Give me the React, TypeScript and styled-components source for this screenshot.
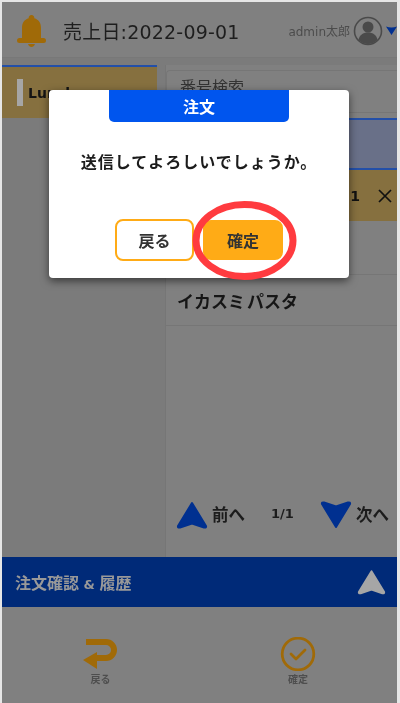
import React from "react";
import styled, { createGlobalStyle } from "styled-components";

const Global = createGlobalStyle`
  html, body { margin: 0; padding: 0; background: #e6e6e6; }
  * { box-sizing: border-box; }
  body { font-family: "DejaVu Sans", "Noto Sans CJK JP", sans-serif; }
`;

const Frame = styled.div`
  width: 400px;
  height: 703px;
  padding: 2px 3px 0 2px;
  background: #e6e6e6;
  overflow: hidden;
  filter: blur(0.35px);
`;
const Screen = styled.div`
  position: relative;
  height: 701px;
  display: flex;
  flex-direction: column;
  background: #808080;
`;
const Header = styled.header`
  height: 56px;
  flex: none;
  display: flex;
  align-items: center;
  padding: 2px 0 0 15px;
  border-bottom: 1px solid #787878;
`;
const DateText = styled.div`
  margin-left: 17px;
  font-size: 19px;
  letter-spacing: 0.2px;
  color: #1e1e1e;
  flex: 1;
`;
const UserName = styled.div`
  font-size: 12px;
  color: #4c4c4c;
  margin-right: 3px;
`;
const Caret = styled.svg`
  margin-left: 3px;
  flex: none;
`;
const Main = styled.main`
  flex: 1;
  display: flex;
  background: #7b7b7b;
  padding-top: 7px;
  min-height: 0;
`;
const Side = styled.aside`
  width: 155px;
  flex: none;
  border-top: 2px solid #234fa8;
`;
const Tab = styled.div`
  height: 51px;
  display: flex;
  align-items: center;
  background: #86703f;
  padding-left: 15px;
  gap: 5px;
  font-weight: 700;
  font-size: 14px;
  color: #141414;
`;
const TabMark = styled.span`
  width: 6px;
  height: 27px;
  background: #a6a6a6;
`;
const Right = styled.section`
  margin-left: 8px;
  flex: 1;
  min-width: 0;
  display: flex;
  flex-direction: column;
  background: #808080;
  border-left: 1px solid #767676;
  padding-bottom: 24px;
`;
const Search = styled.div`
  height: 43px;
  margin-top: 5px;
  flex: none;
  padding: 3px 0 0 13px;
  font-size: 16px;
  color: #333;
  border: 1px solid #767676;
  border-right: 0;
  border-radius: 4px 0 0 4px;
`;
const SelectedBand = styled.div`
  height: 52px;
  margin-top: 5px;
  flex: none;
  background: #697088;
  border-top: 2px solid #234fa8;
  border-bottom: 2px solid #234fa8;
`;
const TanRow = styled.div`
  height: 51px;
  flex: none;
  display: flex;
  align-items: center;
  justify-content: flex-end;
  background: #86703f;
  color: #111;
  padding-right: 5px;
  font-weight: 700;
  font-size: 14px;
  gap: 18px;
`;
const Row = styled.div<{ $h: number }>`
  height: ${(p) => p.$h}px;
  flex: none;
  display: flex;
  align-items: center;
  padding-left: 11px;
  border-bottom: 1px solid #767676;
  font-weight: 700;
  font-size: 17px;
  word-spacing: -4px;
  color: #161616;
`;
const Pager = styled.nav`
  margin-top: auto;
  height: 36px;
  display: flex;
  align-items: center;
  padding-left: 10px;
  font-weight: 700;
  color: #1c1c1c;
  font-size: 16.5px;
`;
const PagerLabel = styled.span`
  margin: 0 0 3px 4px;
`;
const PageCount = styled.span`
  width: 75px;
  margin-bottom: 3px;
  text-align: center;
  font-size: 13px;
`;
const Accordion = styled.div`
  height: 50px;
  flex: none;
  display: flex;
  align-items: center;
  justify-content: space-between;
  padding: 0 11px 0 13px;
  background: #002a78;
  color: #999;
  font-weight: 700;
  font-size: 16px;
`;
const Amp = styled.span`
  font-size: 13px;
`;
const Footer = styled.footer`
  height: 96px;
  flex: none;
  display: grid;
  grid-template-columns: 197px 198px;
  padding-top: 30px;
`;
const FootItem = styled.div`
  display: flex;
  flex-direction: column;
  align-items: center;
  font-size: 10px;
  font-weight: 700;
  color: #4e4e4e;
  gap: 2px;
  line-height: 14px;
`;
const Modal = styled.div`
  position: absolute;
  left: 47px;
  top: 88px;
  width: 300px;
  height: 188px;
  background: #fff;
  border-radius: 4px;
  box-shadow: 0 3px 9px rgba(0, 0, 0, 0.55);
  display: flex;
  flex-direction: column;
  align-items: center;
`;
const ModalTitle = styled.div`
  width: 180px;
  height: 32px;
  flex: none;
  display: flex;
  align-items: center;
  justify-content: center;
  background: #0055ee;
  color: #fff;
  font-weight: 700;
  font-size: 16px;
  border-radius: 0 0 5px 5px;
`;
const ModalText = styled.p`
  margin: 30px 0 0;
  font-size: 16px;
  letter-spacing: 1px;
  font-weight: 700;
  line-height: 22px;
  color: #1c1c1c;
  white-space: nowrap;
`;
const Actions = styled.div`
  margin-top: 45px;
  display: flex;
  align-items: center;
  gap: 9px;
`;
const Button = styled.div<{ $primary?: boolean }>`
  width: ${(p) => (p.$primary ? 80 : 79)}px;
  height: ${(p) => (p.$primary ? 40 : 42)}px;
  display: flex;
  align-items: center;
  justify-content: center;
  border-radius: 8px;
  border: 2px solid #ffab16;
  background: ${(p) => (p.$primary ? "#ffab16" : "#fff")};
  font-weight: 700;
  font-size: 16px;
  color: #333;
`;
const Ring = styled.svg`
  position: absolute;
  left: 140px;
  top: 109px;
`;

const NavArrow = ({ w, h, color, down }: { w: number; h: number; color: string; down?: boolean }) => (
  <svg width={w} height={h} viewBox="0 0 32 28" style={down ? { transform: "rotate(180deg)" } : undefined}>
    <path d="M16 2 L30 25 Q30.500 27 28 26.500 L16 22.500 L4 26.500 Q1.500 27 2 25 Z" fill={color} stroke={color} strokeWidth="2" strokeLinejoin="round" />
  </svg>
);

export default function App() {
  return (
    <Frame>
      <Global />
      <Screen>
        <Header>
          <svg width="29" height="32" viewBox="0 0 29 32">
            <path d="M14.500 0a2.800 2.800 0 0 1 2.800 3.200C21.800 4.500 24 8 24 13v10H5V13c0-5 2.200-8.500 6.700-9.800A2.800 2.800 0 0 1 14.500 0Z" fill="#a06a08" />
            <rect x="0" y="23" width="29" height="5" rx="2.500" fill="#a06a08" />
            <path d="M11 29h7c-.6 1.800-2 3-3.500 3S11.600 30.800 11 29Z" fill="#a06a08" />
          </svg>
          <DateText>売上日:2022-09-01</DateText>
          <UserName>admin太郎</UserName>
          <svg width="30" height="30" viewBox="0 0 30 30">
            <circle cx="15" cy="15" r="13.500" fill="none" stroke="#4a4a4a" strokeWidth="1.600" />
            <circle cx="15" cy="11" r="5.500" fill="#4a4a4a" />
            <path d="M5.500 24c.8-5 4.500-7.500 9.500-7.500s8.700 2.500 9.500 7.500c-2.500 2.500-5.800 4-9.500 4s-7-1.500-9.500-4Z" fill="#4a4a4a" />
          </svg>
          <Caret width="11" height="9" viewBox="0 0 11 9">
            <path d="M0 0.500 Q5.500 2.500 11 0.500 L5.500 9 Z" fill="#003090" />
          </Caret>
        </Header>
        <Main>
          <Side>
            <Tab>
              <TabMark />
              Lunch
            </Tab>
          </Side>
          <Right>
            <Search>番号検索</Search>
            <SelectedBand />
            <TanRow>
              <span>1</span>
              <svg width="14" height="14" viewBox="0 0 14 14">
                <path d="M1 1 13 13M13 1 1 13" stroke="#111" strokeWidth="1.700" fill="none" />
              </svg>
            </TanRow>
            <Row $h={54} />
            <Row $h={51}>イカスミ パスタ</Row>
            <Pager>
              <NavArrow w={32} h={28} color="#003090" />
              <PagerLabel>前へ</PagerLabel>
              <PageCount>1/1</PageCount>
              <NavArrow w={32} h={28} color="#003090" down />
              <PagerLabel>次へ</PagerLabel>
            </Pager>
          </Right>
        </Main>
        <Accordion>
          <span>
            注文確認<Amp> &amp; </Amp>履歴
          </span>
          <NavArrow w={29} h={26} color="#a6a6a6" />
        </Accordion>
        <Footer>
          <FootItem>
            <svg width="36" height="34" viewBox="0 -2 36 34">
              <path d="M3 3h20a8 8 0 0 1 0 16H12" fill="none" stroke="#a06a08" strokeWidth="6" />
              <path d="M0 21 14 13v17Z" fill="#a06a08" />
            </svg>
            戻る
          </FootItem>
          <FootItem>
            <svg width="36" height="34" viewBox="0 0 36 34">
              <circle cx="18" cy="17" r="15.800" fill="none" stroke="#a06a08" strokeWidth="2.800" />
              <path d="M11 17l5 5 9-9" fill="none" stroke="#a06a08" strokeWidth="2.800" strokeLinecap="round" strokeLinejoin="round" />
            </svg>
            確定
          </FootItem>
        </Footer>
        <Modal>
          <ModalTitle>注文</ModalTitle>
          <ModalText>送信してよろしいでしょうか。</ModalText>
          <Actions>
            <Button>戻る</Button>
            <Button $primary>確定</Button>
          </Actions>
          <Ring width="110" height="82" viewBox="0 0 110 82">
            <ellipse cx="55.500" cy="41.500" rx="48.500" ry="36" fill="none" stroke="#ff3b3f" strokeWidth="7" />
          </Ring>
        </Modal>
      </Screen>
    </Frame>
  );
}
